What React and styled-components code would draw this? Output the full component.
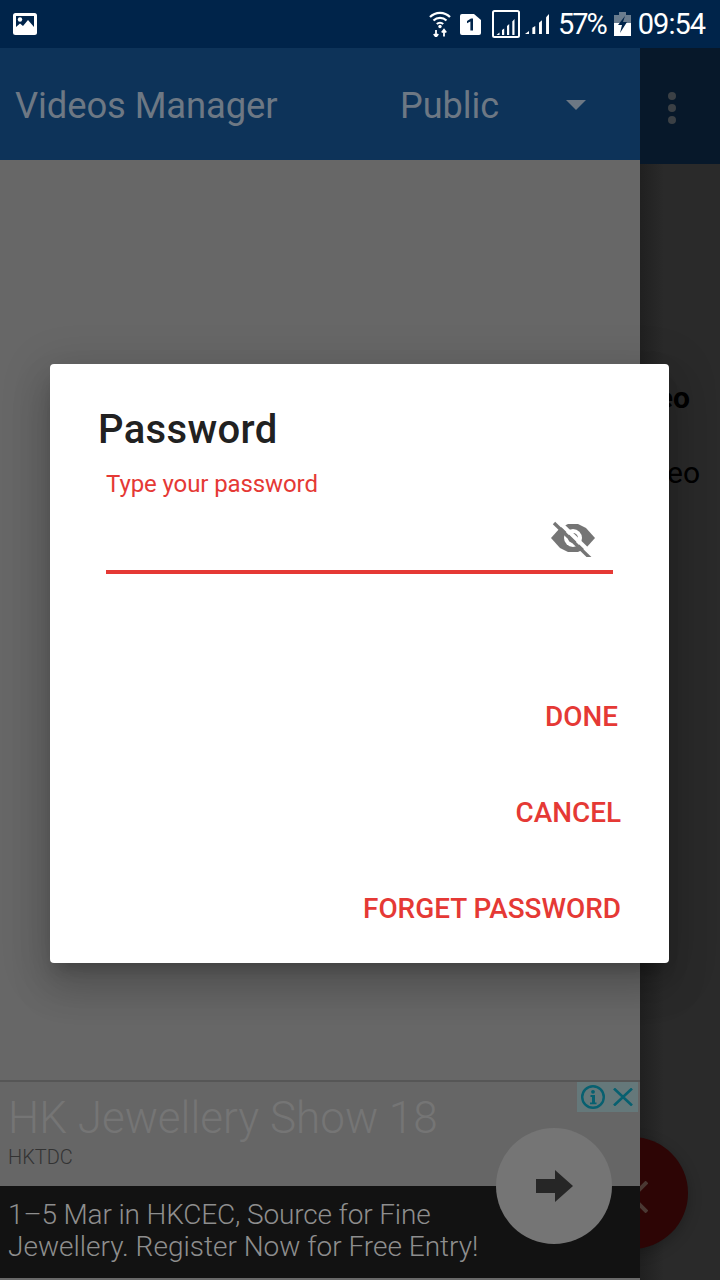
import React from "react";
import styled, { createGlobalStyle } from "styled-components";

const GlobalStyle = createGlobalStyle`
  html, body {
    margin: 0;
    padding: 0;
    background: #282828;
  }
  * {
    box-sizing: border-box;
  }
`;

const Screen = styled.div`
  position: relative;
  width: 720px;
  height: 1280px;
  overflow: hidden;
  display: flex;
  flex-direction: column;
  font-family: Roboto, "Liberation Sans", sans-serif;
`;

/* status bar */
const StatusBar = styled.div`
  height: 48px;
  flex: none;
  display: flex;
  align-items: center;
  justify-content: space-between;
  padding: 0 15px 0 13px;
  background: #00244a;
  color: #fff;
`;
const StatusGroup = styled.div`
  display: flex;
  align-items: center;
`;
const StatusItem = styled.span`
  display: flex;
  margin-left: ${(p) => p.$left || 0}px;
`;
const StatusText = styled.span`
  font-size: 29px;
  line-height: 48px;
  letter-spacing: ${(p) => p.$spacing}px;
`;

/* page under the dialog */
const Body = styled.div`
  flex: 1;
  display: flex;
  min-height: 0;
`;
const MainPane = styled.div`
  width: 640px;
  flex: none;
  display: flex;
  flex-direction: column;
  z-index: 1;
  background: #696969;
`;
const AppBar = styled.div`
  height: 112px;
  flex: none;
  display: flex;
  align-items: center;
  padding: 4px 0 0 15px;
  background: #0d3359;
  color: #6d7884;
`;
const AppTitle = styled.div`
  width: 385px;
  margin-top: -2px;
  font-size: 36.4px;
  letter-spacing: -0.1px;
`;
const SpinnerValue = styled.div`
  width: 166px;
  font-size: 36px;
`;
const SpinnerCaret = styled.div`
  width: 0;
  height: 0;
  border-left: 10px solid transparent;
  border-right: 10px solid transparent;
  border-top: 10px solid #6d7884;
  margin-top: -2px;
`;
const Content = styled.div`
  flex: 1;
  background: #676767;
`;

const AdBanner = styled.div`
  position: relative;
  height: 198px;
  flex: none;
  margin-bottom: 2px;
  display: flex;
  flex-direction: column;
  border-top: 2px solid #565656;
`;
const AdHead = styled.div`
  height: 104px;
  flex: none;
  padding: 11px 8px 0;
  background: #666;
`;
const AdTitle = styled.div`
  font-size: 44px;
  line-height: 51px;
  font-weight: 300;
  color: #757575;
`;
const AdSource = styled.div`
  font-size: 20px;
  line-height: 26px;
  font-weight: 300;
  color: #333;
`;
const AdBody = styled.div`
  flex: 1;
  padding: 13px 8px 0;
  background: #121212;
  font-size: 28px;
  line-height: 32px;
  font-weight: 300;
  color: #8e8e8e;
`;
const AdLine = styled.div`
  letter-spacing: ${(p) => p.$spacing || 0}px;
`;
const AdChoices = styled.div`
  position: absolute;
  top: 0;
  left: 577px;
  width: 61px;
  height: 30px;
  display: flex;
  align-items: center;
  gap: 8px;
  padding-left: 4px;
  background: #65787a;
`;
const AdAction = styled.div`
  position: absolute;
  left: 496px;
  top: 46px;
  width: 116px;
  height: 116px;
  border-radius: 50%;
  display: flex;
  align-items: center;
  justify-content: center;
  background: #757575;
`;

/* strip of the next page that shows on the right */
const SidePane = styled.div`
  position: relative;
  flex: 1;
  min-width: 0;
  display: flex;
  flex-direction: column;
  background: linear-gradient(90deg, #202020, #2a2a2a 24px);
`;
const SideBar = styled.div`
  height: 116px;
  flex: none;
  display: flex;
  align-items: center;
  justify-content: center;
  padding: 4px 16px 0 0;
  background: #07182a;
`;
const SideList = styled.div`
  display: flex;
  flex-direction: column;
  align-items: flex-end;
  padding: 216px 30px 0 0;
  color: #000;
  font-size: 30px;
  line-height: 35px;
  white-space: nowrap;
`;
const SideTitle = styled.div`
  font-weight: 700;
  margin-bottom: 40px;
`;
const SideLine = styled.div`
  margin-right: -10px;
`;
const Fab = styled.div`
  position: absolute;
  left: -64px;
  top: 1089px;
  width: 112px;
  height: 112px;
  border-radius: 50%;
  background: #2d0505;
  box-shadow: 0 4px 14px rgba(0, 0, 0, 0.25);
  display: flex;
  align-items: center;
  justify-content: center;
  padding-top: 8px;
`;

/* dialog */
const Overlay = styled.div`
  position: absolute;
  inset: 48px 0 0;
  z-index: 2;
  display: flex;
  align-items: center;
  justify-content: center;
  padding: 0 1px 2px 0;
`;
const Dialog = styled.div`
  width: 619px;
  height: 599px;
  display: flex;
  flex-direction: column;
  padding: 41px 48px 0;
  background: #fff;
  border-radius: 4px;
  box-shadow: 0 24px 38px 3px rgba(0, 0, 0, 0.14),
    0 9px 46px 8px rgba(0, 0, 0, 0.12), 0 11px 15px -7px rgba(0, 0, 0, 0.2);
`;
const DialogTitle = styled.div`
  font-size: 40px;
  line-height: 50px;
  font-weight: 500;
  letter-spacing: 0.35px;
  color: #212121;
`;
const PasswordField = styled.div`
  display: flex;
  flex-direction: column;
  margin: 13px 8px 0;
`;
const FieldLabel = styled.div`
  font-size: 24px;
  line-height: 32px;
  letter-spacing: -0.1px;
  color: #e53935;
`;
const FieldInput = styled.div`
  height: 74px;
  display: flex;
  align-items: center;
  justify-content: flex-end;
  padding: 6px 16px 0 0;
  border-bottom: 4px solid #e53935;
`;
const Actions = styled.div`
  flex: 1;
  display: flex;
  flex-direction: column;
  align-items: flex-end;
  padding-top: 126px;
  gap: 63px;
`;
const ActionButton = styled.button`
  border: none;
  background: transparent;
  padding: 0;
  margin-right: ${(p) => p.$inset || 0}px;
  font-family: inherit;
  font-size: 27.9px;
  line-height: 33px;
  font-weight: 500;
  color: #e53935;
`;

function GalleryIcon() {
  return (
    <svg width="24" height="24" viewBox="0 0 24 24">
      <rect width="24" height="22" y="1" rx="2.5" fill="#fff" />
      <rect x="3" y="4" width="18" height="12" fill="#00244a" />
      <circle cx="7" cy="7.5" r="2.2" fill="#fff" />
      <path d="M3 20 L3 15 L7 11.5 L10 14 L15 8 L21 15 L21 20 Z" fill="#fff" />
    </svg>
  );
}

function WifiIcon() {
  return (
    <svg width="22" height="26" viewBox="0 0 22 26" fill="none" stroke="#fff">
      <path d="M1 6 A14 14 0 0 1 21 6" strokeWidth="2.2" />
      <path d="M4.5 9.5 A9.5 9.5 0 0 1 17.5 9.5" strokeWidth="2.2" />
      <path d="M7.8 13 A4.8 4.8 0 0 1 14.2 13" strokeWidth="2.2" />
      <circle cx="11" cy="15.5" r="1.7" fill="#fff" stroke="none" />
      <path
        d="M7 19 V25.5 M4.8 23 L7 25.8 L9.2 23 M15 25.5 V19 M12.8 21.5 L15 18.7 L17.2 21.5"
        strokeWidth="1.8"
      />
    </svg>
  );
}

function SimIcon() {
  return (
    <svg width="21" height="21" viewBox="0 0 21 21">
      <path
        d="M2 0 H14 L21 6 V19 A2 2 0 0 1 19 21 H2 A2 2 0 0 1 0 19 V2 A2 2 0 0 1 2 0 Z"
        fill="#fff"
      />
      <path d="M7 7 L11 4.5 H13 V16.5 H10.4 V7.6 L7 9.2 Z" fill="#00244a" />
    </svg>
  );
}

function SignalBars() {
  return (
    <g fill="#fff">
      <path d="M0 16 L3 13.5 V16 Z" />
      <path d="M5.5 16 V11 L7.7 9.5 V16 Z" />
      <path d="M10.5 16 V7 L12.7 5 V16 Z" />
      <path d="M15.8 16 V2.5 L18 0 V16 Z" />
    </g>
  );
}

function BoxedSignalIcon() {
  return (
    <svg width="28" height="28" viewBox="0 0 28 28">
      <rect x="1" y="1" width="26" height="26" rx="1.5" fill="none" stroke="#fff" strokeWidth="2" />
      <g transform="translate(4.5 9)">
        <SignalBars />
      </g>
    </svg>
  );
}

function PlainSignalIcon() {
  return (
    <svg width="24" height="20" viewBox="0 0 18 16" preserveAspectRatio="none">
      <SignalBars />
    </svg>
  );
}

function BatteryIcon() {
  return (
    <svg width="17" height="24" viewBox="0 0 17 24">
      <path d="M5 0 H12 V3 H17 V24 H0 V3 H5 Z" fill="#fff" />
      <path d="M5 0 H12 V3 H17 V11 H0 V3 H5 Z" fill="#6a7c8e" />
      <path d="M11 4 L4 13 H8 L6 21 L13 10 H9 Z" fill="#00244a" />
    </svg>
  );
}

function MenuDots() {
  return (
    <svg width="8" height="32" viewBox="0 0 8 32" fill="#3b4045">
      <circle cx="4" cy="4" r="4" />
      <circle cx="4" cy="16" r="4" />
      <circle cx="4" cy="28" r="4" />
    </svg>
  );
}

function EyeOffIcon() {
  return (
    <svg width="46" height="38" viewBox="0 0 46 38">
      <path d="M0 19 L9 9 L17 5 H27 L35 9 L44 19 L35 29 L27 33 H17 L9 29 Z" fill="#757575" />
      <circle cx="22" cy="19" r="9" fill="#fff" />
      <circle cx="22" cy="19" r="5" fill="#757575" />
      <path d="M7 2 L44 38" stroke="#fff" strokeWidth="4" />
      <path d="M3 4 L40 40" stroke="#757575" strokeWidth="3.4" />
    </svg>
  );
}

function InfoIcon() {
  return (
    <svg width="24" height="24" viewBox="0 0 24 24">
      <circle cx="12" cy="12" r="10.8" fill="none" stroke="#076070" strokeWidth="2.4" />
      <circle cx="12" cy="6.8" r="1.9" fill="#076070" />
      <path d="M9.5 10 H14 V17.5 H15.5 V19.2 H9 V17.5 H11 V12 H9.5 Z" fill="#076070" />
    </svg>
  );
}

function CloseIcon() {
  return (
    <svg width="20" height="18" viewBox="0 0 20 18">
      <path d="M1 0.5 L19 17.5 M19 0.5 L1 17.5" stroke="#076070" strokeWidth="2.6" />
    </svg>
  );
}

function ArrowIcon() {
  return (
    <svg width="37" height="32" viewBox="0 0 37 32">
      <path d="M0 9 H19 V0 L37 16 L19 32 V23 H0 Z" fill="#262626" />
    </svg>
  );
}

function FabIcon() {
  return (
    <svg width="32" height="32" viewBox="0 0 32 32">
      <path d="M1 1 L31 31 M31 1 L1 31" stroke="#4a3833" strokeWidth="4" />
    </svg>
  );
}

export default function App() {
  return (
    <Screen>
      <GlobalStyle />
      <StatusBar>
        <GalleryIcon />
        <StatusGroup>
          <StatusItem>
            <WifiIcon />
          </StatusItem>
          <StatusItem $left={9}>
            <SimIcon />
          </StatusItem>
          <StatusItem $left={11}>
            <BoxedSignalIcon />
          </StatusItem>
          <StatusItem $left={5}>
            <PlainSignalIcon />
          </StatusItem>
          <StatusItem $left={9}>
            <StatusText $spacing={-2}>57%</StatusText>
          </StatusItem>
          <StatusItem $left={8}>
            <BatteryIcon />
          </StatusItem>
          <StatusItem $left={7}>
            <StatusText $spacing={-1}>09:54</StatusText>
          </StatusItem>
        </StatusGroup>
      </StatusBar>

      <Body>
        <MainPane>
          <AppBar>
            <AppTitle>Videos Manager</AppTitle>
            <SpinnerValue>Public</SpinnerValue>
            <SpinnerCaret />
          </AppBar>
          <Content />
          <AdBanner>
            <AdHead>
              <AdTitle>HK Jewellery Show 18</AdTitle>
              <AdSource>HKTDC</AdSource>
            </AdHead>
            <AdBody>
              <AdLine $spacing={-0.15}>1–5 Mar in HKCEC, Source for Fine</AdLine>
              <AdLine>Jewellery. Register Now for Free Entry!</AdLine>
            </AdBody>
            <AdChoices>
              <InfoIcon />
              <CloseIcon />
            </AdChoices>
            <AdAction>
              <ArrowIcon />
            </AdAction>
          </AdBanner>
        </MainPane>

        <SidePane>
          <SideBar>
            <MenuDots />
          </SideBar>
          <SideList>
            <SideTitle>Video</SideTitle>
            <SideLine>Video</SideLine>
          </SideList>
          <Fab>
            <FabIcon />
          </Fab>
        </SidePane>
      </Body>

      <Overlay>
        <Dialog>
          <DialogTitle>Password</DialogTitle>
          <PasswordField>
            <FieldLabel>Type your password</FieldLabel>
            <FieldInput>
              <EyeOffIcon />
            </FieldInput>
          </PasswordField>
          <Actions>
            <ActionButton $inset={3}>DONE</ActionButton>
            <ActionButton>CANCEL</ActionButton>
            <ActionButton>FORGET PASSWORD</ActionButton>
          </Actions>
        </Dialog>
      </Overlay>
    </Screen>
  );
}
